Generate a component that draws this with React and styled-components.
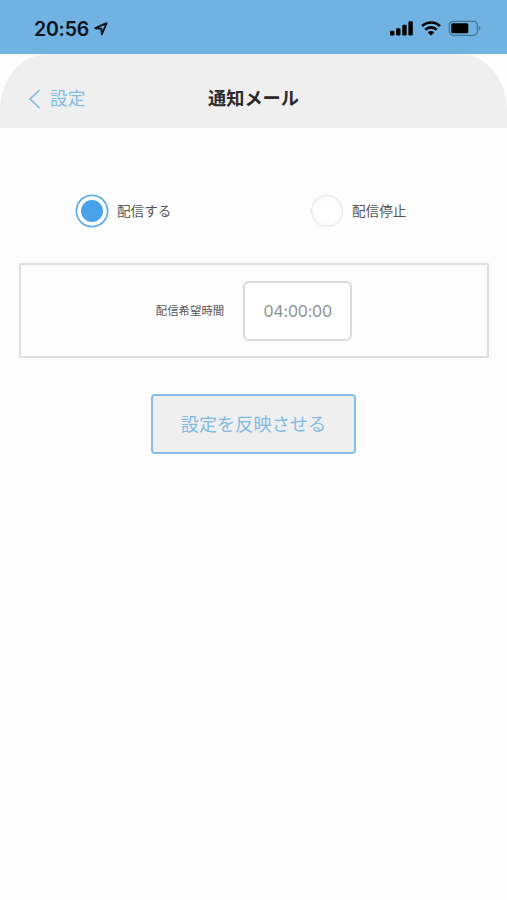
import React, { useState } from "react";
import styled, { createGlobalStyle } from "styled-components";

const GlobalStyle = createGlobalStyle`
  * {
    box-sizing: border-box;
  }

  body {
    margin: 0;
    background: #fdfdfd;
    font-family: Inter, "Noto Sans CJK JP", sans-serif;
  }

  button,
  input {
    font-family: inherit;
  }
`;

const Screen = styled.div`
  display: flex;
  flex-direction: column;

  width: 100%;
  min-height: 900px;
`;

const StatusBar = styled.div`
  display: flex;
  justify-content: space-between;
  align-items: center;

  height: 54px;
  padding: 3px 26px 0 34px;

  background: #70b2e2;
`;

const StatusGroup = styled.div`
  display: flex;
  align-items: center;
  gap: ${(props) => props.$gap};
`;

const Clock = styled.span`
  font-size: 19.5px;
  font-weight: 600;
  letter-spacing: -0.2px;
  line-height: 24px;

  color: #07121b;
`;

const Header = styled.header`
  display: grid;
  grid-template-columns: 1fr auto 1fr;
  align-items: center;

  height: 74px;
  padding: 14px 28px 0;

  background: #efefef;
  border-radius: 48px 48px 0 0 / 56px 56px 0 0;
`;

const BackLink = styled.a`
  display: flex;
  align-items: center;
  gap: 9px;

  padding-top: 1px;

  font-size: 17.7px;
  line-height: 26px;

  color: #82bae2;
`;

const Title = styled.h1`
  margin: 0;

  font-size: 18.2px;
  font-weight: 700;
  line-height: 26px;

  color: #2a2a2a;
`;

const Options = styled.div`
  display: grid;
  grid-template-columns: 235px auto;

  padding: 67px 0 0 76px;
`;

const Option = styled.label`
  display: flex;
  align-items: center;
  gap: 9px;

  font-size: 13.6px;
  line-height: 20px;

  color: #555555;
`;

const Radio = styled.input`
  appearance: none;
  flex: none;

  width: 32px;
  height: 32px;
  margin: 0;
  padding: 4px;

  border: 1.5px solid #e2e2e2;
  border-radius: 50%;
  background: #ffffff;
  background-clip: content-box;

  &:checked {
    border-color: #5eaee9;
    background-color: #49a3ea;
    box-shadow: 0 0 0 0.5px #5eaee9;
  }
`;

const TimeBox = styled.div`
  display: flex;
  justify-content: center;
  align-items: center;
  gap: 19px;

  height: 95px;
  margin: 36px 18px 0 19px;

  border: 2px solid #dedede;
  border-radius: 1px;
`;

const TimeLabel = styled.span`
  font-size: 11.4px;
  line-height: 18px;

  color: #555555;
`;

const TimeValue = styled.div`
  display: flex;
  justify-content: center;
  align-items: center;

  width: 109px;
  height: 60px;

  border: 2px solid #dadada;
  border-radius: 6px;
  background: #ffffff;

  font-size: 16px;
  letter-spacing: -0.2px;
  color: #909090;
`;

const SubmitButton = styled.button`
  align-self: center;

  width: 205px;
  height: 60px;
  margin-top: 36px;
  padding: 0 0 2px;

  border: 2px solid #86bde4;
  border-radius: 4px;
  background: #efefef;

  font-size: 18.2px;
  color: #82bae2;
`;

const LocationIcon = () => (
  <svg width="14" height="14" viewBox="0 0 14 14">
    <path
      d="M1.3 6.2 12.6 1.2 7.9 12.2 7.2 6.6Z"
      fill="none"
      stroke="#07121b"
      strokeWidth="1.9"
      strokeLinejoin="round"
    />
  </svg>
);

const SignalIcon = () => (
  <svg width="23" height="15" viewBox="0 0 23 15">
    <rect x="0" y="9.7" width="4.4" height="4.8" rx="1.2" />
    <rect x="6.1" y="7.3" width="4.4" height="7.2" rx="1.2" />
    <rect x="12.3" y="3.8" width="4.4" height="10.7" rx="1.2" />
    <rect x="18.4" y="0.3" width="4.4" height="14.2" rx="1.2" />
  </svg>
);

const WifiIcon = () => (
  <svg width="20" height="15" viewBox="0 0 20 15">
    <g fill="none" stroke="#000000" strokeWidth="2.6">
      <path d="M1.1 5.1a12.7 12.7 0 0 1 17.8 0" />
      <path d="M4.3 8.7a8.2 8.2 0 0 1 11.4 0" />
    </g>
    <path d="M10 14.5 6.8 11.4a4.6 4.6 0 0 1 6.4 0Z" />
  </svg>
);

const BatteryIcon = () => (
  <svg width="33" height="17" viewBox="0 0 33 17">
    <rect
      x="1.3"
      y="1.3"
      width="28"
      height="14"
      rx="4"
      fill="none"
      stroke="#477596"
      strokeWidth="1.3"
    />
    <rect x="3.3" y="3.3" width="17" height="10" rx="1.5" />
    <path d="M30.8 5.8c2.1.8 2.1 4.2 0 5Z" fill="#477596" />
  </svg>
);

const BackIcon = () => (
  <svg width="13" height="20" viewBox="0 0 13 20">
    <path
      d="M11.5 1 2 10l9.5 9"
      fill="none"
      stroke="#76b5e1"
      strokeWidth="1.4"
    />
  </svg>
);

const App = () => {
  const [delivery, setDelivery] = useState("on");

  return (
    <Screen>
      <GlobalStyle />
      <StatusBar>
        <StatusGroup $gap="5px">
          <Clock>20:56</Clock>
          <LocationIcon />
        </StatusGroup>
        <StatusGroup $gap="7.5px">
          <SignalIcon />
          <WifiIcon />
          <BatteryIcon />
        </StatusGroup>
      </StatusBar>
      <Header>
        <BackLink>
          <BackIcon />
          設定
        </BackLink>
        <Title>通知メール</Title>
      </Header>
      <Options>
        <Option>
          <Radio
            type="radio"
            name="delivery"
            checked={delivery === "on"}
            onChange={() => setDelivery("on")}
          />
          配信する
        </Option>
        <Option>
          <Radio
            type="radio"
            name="delivery"
            checked={delivery === "off"}
            onChange={() => setDelivery("off")}
          />
          配信停止
        </Option>
      </Options>
      <TimeBox>
        <TimeLabel>配信希望時間</TimeLabel>
        <TimeValue>04:00:00</TimeValue>
      </TimeBox>
      <SubmitButton type="button">設定を反映させる</SubmitButton>
    </Screen>
  );
};

export default App;
